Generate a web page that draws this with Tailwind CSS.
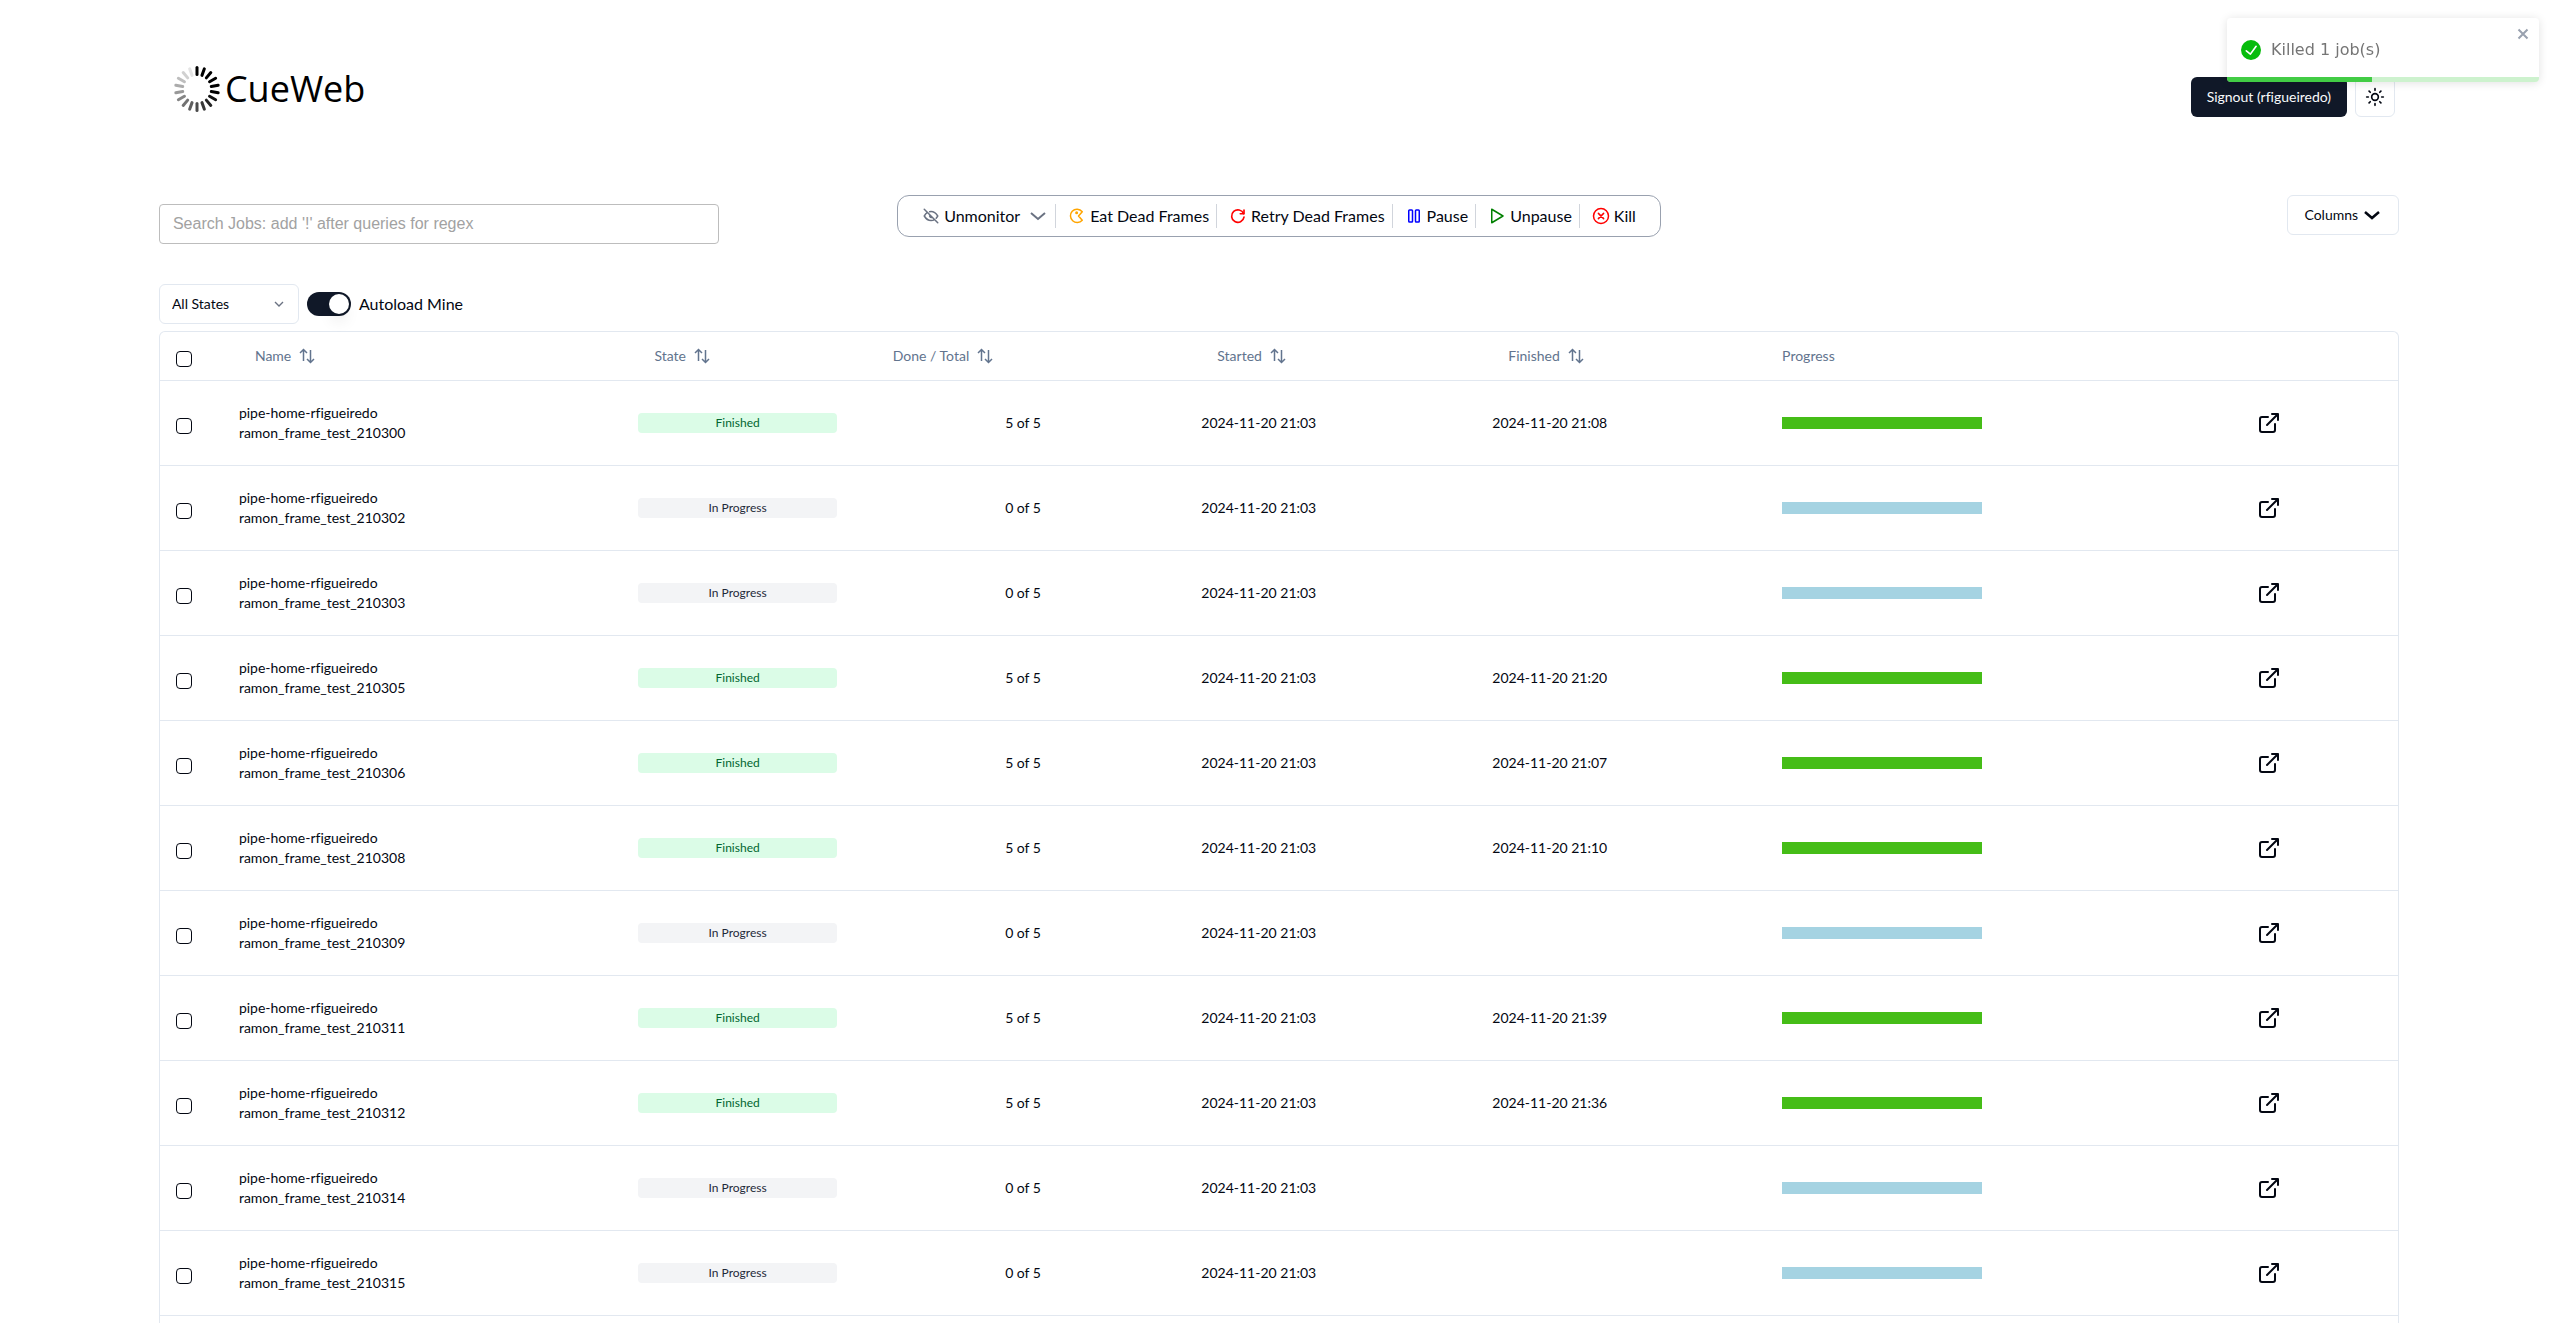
<!DOCTYPE html>
<html lang="en">
<head>
    <meta charset="UTF-8">
    <meta name="viewport" content="width=device-width, initial-scale=1.0">
    <title>CueWeb</title>
    <script src="https://cdn.jsdelivr.net/npm/@tailwindcss/browser@4"></script>
</head>
<body class="bg-white text-sm text-gray-950 font-['Lato',sans-serif] [font-variant-ligatures:none]">
    <div class="w-[90%] mx-auto px-[31px]">
        <header class="flex items-center justify-between pt-[60px] pr-1">
            <h1 class="flex items-center gap-1 pl-[14px] text-4xl font-medium text-black leading-[58px] font-['Open_Sans',sans-serif]">
                <svg id="logo" class="size-12" viewBox="-24 -24 48 48" stroke="#000" stroke-width="3" stroke-linecap="round"></svg>
                CueWeb
            </h1>
            <div class="flex gap-2 pt-4">
                <button class="h-10 px-4 rounded-md bg-gray-900 text-slate-50">Signout (rfigueiredo)</button>
                <button aria-label="Toggle theme" class="size-10 flex items-center justify-center rounded-md border border-slate-200">
                    <svg class="size-5" viewBox="0 0 24 24" fill="none" stroke="currentColor" stroke-width="2" stroke-linecap="round"><circle cx="12" cy="12" r="4"/><path d="M12 2v2M12 20v2M4.9 4.9l1.4 1.4M17.7 17.7l1.4 1.4M2 12h2M20 12h2M6.3 17.7l-1.4 1.4M19.1 4.9l-1.4 1.4"/></svg>
                </button>
            </div>
        </header>

        <!-- search, job actions, column picker -->
        <div class="grid grid-cols-[1fr_auto_1fr] items-start pt-[77px]">
            <div class="pt-[9px]">
                <input type="text" aria-label="Search jobs" placeholder="Search Jobs: add '!' after queries for regex"
                    class="block w-[560px] max-w-full h-10 px-[13px] rounded border border-[#bdbdbd] text-base font-['Liberation_Sans',sans-serif] placeholder:text-[#a2a2a2]">
            </div>
            <div class="flex items-center h-[42px] px-3 rounded-xl border border-gray-400 text-base divide-x divide-gray-300">
                <button class="flex items-center gap-1 h-6 pl-3 pr-[7px]">
                    <svg class="size-[18px] text-gray-500" viewBox="0 0 24 24" fill="none" stroke="currentColor" stroke-width="2" stroke-linecap="round" stroke-linejoin="round"><path d="M10.6 10.6a2 2 0 0 0 2.8 2.8M16.7 16.7A8.700 8.700 0 0 1 12 18c-3.600 0-6.600-2-9-6 1.300-2.100 2.700-3.700 4.300-4.700M10.200 6.200A9 9 0 0 1 12 6c3.600 0 6.600 2 9 6-.7 1.100-1.400 2.100-2.100 2.900M3 3l18 18"/></svg>
                    Unmonitor
                    <svg class="size-5 ml-1 text-gray-500" viewBox="0 0 20 20" fill="none" stroke="currentColor" stroke-width="2"><path d="M3 7l7 6 7-6"/></svg>
                </button>
                <button class="flex items-center gap-1 h-6 pl-3 pr-[7px]">
                    <svg class="size-[18px] text-[#ffa500]" viewBox="0 0 24 24" fill="none" stroke="currentColor" stroke-width="2" stroke-linecap="round" stroke-linejoin="round"><path d="M5.600 5.600A9 9 0 0 1 19 6.300L14 12l5 5.700A9 9 0 1 1 5.600 5.600z"/><circle cx="11.500" cy="7.500" r="1" fill="currentColor"/></svg>
                    Eat Dead Frames
                </button>
                <button class="flex items-center gap-1 h-6 pl-3 pr-[7px]">
                    <svg class="size-[18px] text-[#ff0000]" viewBox="0 0 24 24" fill="none" stroke="currentColor" stroke-width="2.200" stroke-linecap="round" stroke-linejoin="round"><path d="M20 4v5h-5"/><path d="M19.500 9A8.300 8.300 0 1 0 20 13.500"/></svg>
                    Retry Dead Frames
                </button>
                <button class="flex items-center gap-1 h-6 pl-3 pr-[7px]">
                    <svg class="size-[18px] text-[#0000ff]" viewBox="0 0 24 24" fill="none" stroke="currentColor" stroke-width="2" stroke-linejoin="round"><rect x="5" y="4" width="5" height="16" rx="1"/><rect x="14" y="4" width="5" height="16" rx="1"/></svg>
                    Pause
                </button>
                <button class="flex items-center gap-1 h-6 pl-3 pr-[7px]">
                    <svg class="size-[18px] text-[#008000]" viewBox="0 0 24 24" fill="none" stroke="currentColor" stroke-width="2" stroke-linejoin="round"><path d="M5 3v18l15-9z"/></svg>
                    Unpause
                </button>
                <button class="flex items-center gap-1 h-6 px-3">
                    <svg class="size-[18px] text-[#ff0000]" viewBox="0 0 24 24" fill="none" stroke="currentColor" stroke-width="2" stroke-linecap="round"><circle cx="12" cy="12" r="10"/><path d="M8.500 8.500l7 7M15.500 8.500l-7 7"/></svg>
                    Kill
                </button>
            </div>
            <button class="justify-self-end flex items-center gap-1 h-10 px-4 rounded-md border border-slate-200">
                Columns
                <svg class="size-5" viewBox="0 0 20 20" fill="none" stroke="currentColor" stroke-width="2.500"><path d="M3 7l7 6 7-6"/></svg>
            </button>
        </div>

        <div class="flex items-center gap-2 pt-10">
            <div class="relative w-[140px]">
                <select aria-label="Job state" class="block appearance-none w-full h-10 px-3 rounded-md border border-slate-200">
                    <option>All States</option>
                </select>
                <svg class="absolute right-3 top-3 size-4 text-gray-500 pointer-events-none" viewBox="0 0 24 24" fill="none" stroke="currentColor" stroke-width="2"><path d="M6 9l6 6 6-6"/></svg>
            </div>
            <label class="flex items-center gap-2 text-base">
                <input type="checkbox" role="switch" checked class="appearance-none w-11 h-6 rounded-full bg-gray-900 before:block before:size-5 before:m-[2px] before:rounded-full before:bg-white before:shadow-lg checked:before:ml-[22px]">
                Autoload Mine
            </label>
        </div>

        <div class="mt-[7px] pb-2 rounded-t-md border border-b-0 border-slate-200">
            <table class="w-full table-fixed">
                <colgroup>
                    <col class="w-[63px]">
                    <col class="w-[17.85%]">
                    <col class="w-[10.65%]">
                    <col class="w-[14.5%]">
                    <col class="w-[13%]">
                    <col class="w-[12.95%]">
                    <col class="w-[21.2%]">
                    <col>
                </colgroup>
                <thead class="text-left text-slate-500">
                    <tr class="h-12 border-b border-slate-200">
                        <th class="pl-4 pt-[6px]"><input type="checkbox" aria-label="Select all" class="block appearance-none size-4 rounded border border-gray-950"></th>
                        <th class="px-8 font-normal"><button class="flex items-center gap-2">Name <svg class="sort size-4"></svg></button></th>
                        <th class="px-8 font-normal"><button class="flex items-center gap-2">State <svg class="sort size-4"></svg></button></th>
                        <th class="px-8 font-normal"><button class="flex items-center gap-2">Done / Total <svg class="sort size-4"></svg></button></th>
                        <th class="px-8 font-normal"><button class="flex items-center gap-2">Started <svg class="sort size-4"></svg></button></th>
                        <th class="px-8 font-normal"><button class="flex items-center gap-2">Finished <svg class="sort size-4"></svg></button></th>
                        <th class="px-4 font-normal">Progress</th>
                        <th></th>
                    </tr>
                </thead>
                <tbody id="jobs"></tbody>
            </table>
        </div>
    </div>

    <div role="status" class="fixed top-[18px] right-[19px] w-[312px] h-16 flex items-center pl-[14px] gap-[10px] rounded bg-white overflow-hidden shadow-[0_1px_10px_rgba(0,0,0,0.12)] text-base text-[#757575] font-['DejaVu_Sans',sans-serif]">
        <svg class="size-5 text-[#07bc0c]" viewBox="0 0 24 24" fill="currentColor"><path d="M12 0a12 12 0 1 0 12 12A12.014 12.014 0 0 0 12 0zm6.927 8.200l-6.845 9.289a1.011 1.011 0 0 1-1.430.188l-4.888-3.908a1 1 0 1 1 1.250-1.562l4.076 3.261 6.227-8.451a1 1 0 1 1 1.610 1.183z"/></svg>
        Killed 1 job(s)
        <button aria-label="Close" class="absolute top-2 right-2 text-gray-400">
            <svg class="size-4" viewBox="0 0 16 16" fill="none" stroke="currentColor" stroke-width="2"><path d="M3.500 3.500l9 9M12.500 3.500l-9 9"/></svg>
        </button>
        <div class="absolute inset-x-0 bottom-0 h-[5px] bg-[#07bc0c]/20">
            <div class="h-full bg-[#07bc0c]/70" style="width: 46.5%"></div>
        </div>
    </div>

    <script>
        const jobs = [
            { id: 210300, done: 5, finished: '2024-11-20 21:08' },
            { id: 210302, done: 0 },
            { id: 210303, done: 0 },
            { id: 210305, done: 5, finished: '2024-11-20 21:20' },
            { id: 210306, done: 5, finished: '2024-11-20 21:07' },
            { id: 210308, done: 5, finished: '2024-11-20 21:10' },
            { id: 210309, done: 0 },
            { id: 210311, done: 5, finished: '2024-11-20 21:39' },
            { id: 210312, done: 5, finished: '2024-11-20 21:36' },
            { id: 210314, done: 0 },
            { id: 210315, done: 0 },
        ];

        document.getElementById('jobs').innerHTML = jobs.map(job => `
            <tr class="h-[85px] border-b border-slate-200">
                <td class="pl-4 pt-[6px]"><input type="checkbox" aria-label="Select ${job.id}" class="block appearance-none size-4 rounded border border-gray-950"></td>
                <td class="px-4">pipe-home-rfigueiredo<br>ramon_frame_test_${job.id}</td>
                <td class="pl-4 pr-6">
                    <div class="${job.finished ? 'bg-green-100 text-green-800' : 'bg-gray-100 text-gray-800'} h-5 rounded-sm text-center text-xs leading-5">${job.finished ? 'Finished' : 'In Progress'}</div>
                </td>
                <td class="px-4 text-center">${job.done} of 5</td>
                <td class="px-4">2024-11-20 21:03</td>
                <td class="px-4">${job.finished || ''}</td>
                <td class="px-4"><div class="${job.finished ? 'bg-[#45bd17]' : 'bg-[#a5d3e2]'} w-[200px] h-3"></div></td>
                <td class="px-4">
                    <a href="#" aria-label="Open ${job.id}" class="block size-6">
                        <svg class="size-6" viewBox="0 0 24 24" fill="none" stroke="currentColor" stroke-width="2" stroke-linecap="round" stroke-linejoin="round"><path d="M15 3h6v6M10 14L21 3M18 13v6a2 2 0 0 1-2 2H5a2 2 0 0 1-2-2V8a2 2 0 0 1 2-2h6"/></svg>
                    </a>
                </td>
            </tr>`).join('');

        document.querySelectorAll('.sort').forEach(svg => {
            svg.setAttribute('viewBox', '0 0 16 16');
            svg.innerHTML = '<path d="M1 5L4.500 1.500 8 5M4.500 1.500V13M8 11L11.500 14.500 15 11M11.500 14.500V2" fill="none" stroke="currentColor" stroke-width="1.500"/>';
        });

        // spinner spokes, fading out clockwise
        let spokes = '';
        for (let i = 0; i < 18; i++) {
            spokes += `<path d="M0 -14.500V-21.500" transform="rotate(${i * 20})" opacity="${i < 6 ? 1 : 1 - (i - 5) * 0.075}"/>`;
        }
        document.getElementById('logo').innerHTML = spokes;
    </script>
</body>
</html>
